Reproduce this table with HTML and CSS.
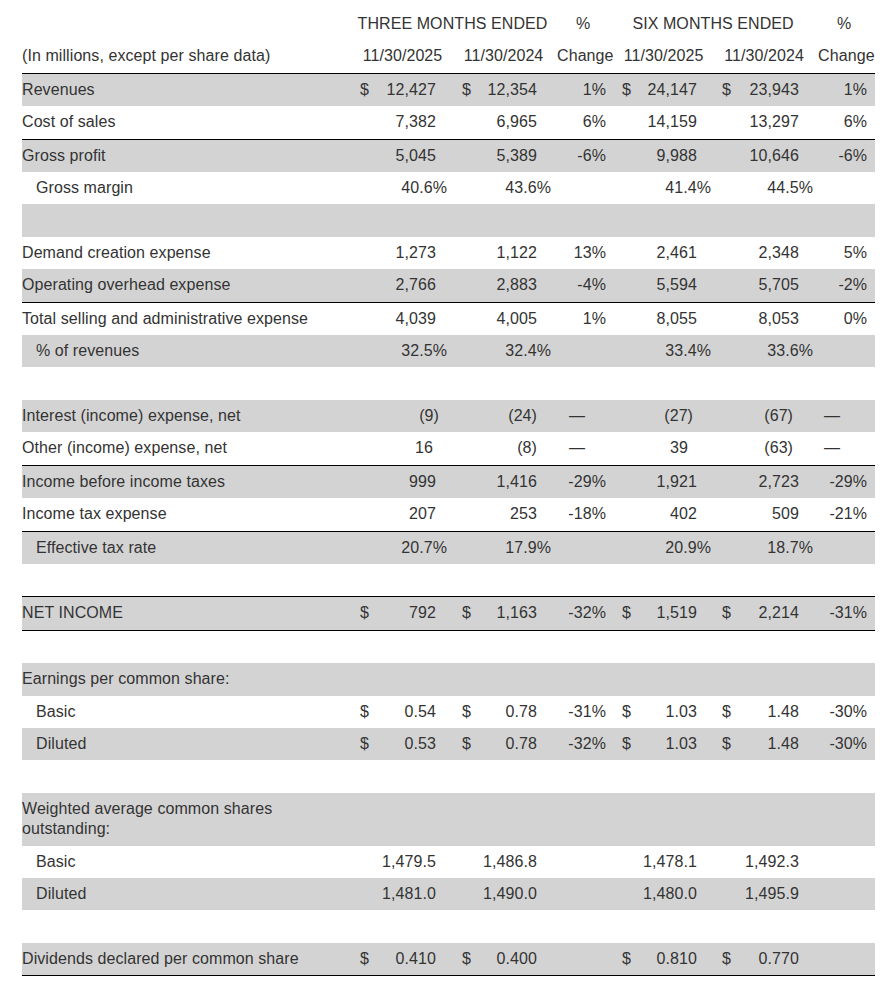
FILE: index.html
```html
<!DOCTYPE html>
<html lang="en">
<head>
<meta charset="utf-8">
<title>Income statement</title>
<link rel="stylesheet" href="styles.css">
</head>
<body>
<table class="fin">
  <colgroup>
    <col class="w-label">
    <col class="w-d"><col class="w-v1"><col class="w-s1">
    <col class="w-d"><col class="w-v2"><col class="w-s2">
    <col class="w-c1">
    <col class="w-d"><col class="w-v3"><col class="w-s3">
    <col class="w-d"><col class="w-v4"><col class="w-s4">
    <col class="w-c2">
  </colgroup>
  <thead>
    <tr>
      <th></th>
      <th colspan="6" class="hd">THREE MONTHS ENDED</th>
      <th class="hd hpct1">%</th>
      <th colspan="6" class="hd hsix">SIX MONTHS ENDED</th>
      <th class="hd hpct2">%</th>
    </tr>
    <tr class="rule">
      <th class="hlabel">(In millions, except per share data)</th>
      <th colspan="3" class="hd">11/30/2025</th>
      <th colspan="3" class="hd">11/30/2024</th>
      <th class="hd hch1">Change</th>
      <th colspan="3" class="hd">11/30/2025</th>
      <th colspan="3" class="hd">11/30/2024</th>
      <th class="hd hch2">Change</th>
    </tr>
  </thead>
  <tbody>
    <tr class="g">
      <td>Revenues</td>
      <td>$</td><td>12,427</td><td></td>
      <td>$</td><td>12,354</td><td></td>
      <td>1%</td>
      <td>$</td><td>24,147</td><td></td>
      <td>$</td><td>23,943</td><td></td>
      <td>1%</td>
    </tr>
    <tr class="rule">
      <td>Cost of sales</td>
      <td></td><td>7,382</td><td></td>
      <td></td><td>6,965</td><td></td>
      <td>6%</td>
      <td></td><td>14,159</td><td></td>
      <td></td><td>13,297</td><td></td>
      <td>6%</td>
    </tr>
    <tr class="g">
      <td>Gross profit</td>
      <td></td><td>5,045</td><td></td>
      <td></td><td>5,389</td><td></td>
      <td>-6%</td>
      <td></td><td>9,988</td><td></td>
      <td></td><td>10,646</td><td></td>
      <td>-6%</td>
    </tr>
    <tr>
      <td class="sub">Gross margin</td>
      <td></td><td class="first"><span class="pct">40.6%</span></td><td></td>
      <td></td><td><span class="pct">43.6%</span></td><td></td>
      <td></td>
      <td></td><td><span class="pct">41.4%</span></td><td></td>
      <td></td><td><span class="pct">44.5%</span></td><td></td>
      <td></td>
    </tr>
    <tr class="g"><td colspan="15">&nbsp;</td></tr>
    <tr>
      <td>Demand creation expense</td>
      <td></td><td>1,273</td><td></td>
      <td></td><td>1,122</td><td></td>
      <td>13%</td>
      <td></td><td>2,461</td><td></td>
      <td></td><td>2,348</td><td></td>
      <td>5%</td>
    </tr>
    <tr class="g rule">
      <td>Operating overhead expense</td>
      <td></td><td>2,766</td><td></td>
      <td></td><td>2,883</td><td></td>
      <td>-4%</td>
      <td></td><td>5,594</td><td></td>
      <td></td><td>5,705</td><td></td>
      <td>-2%</td>
    </tr>
    <tr>
      <td>Total selling and administrative expense</td>
      <td></td><td>4,039</td><td></td>
      <td></td><td>4,005</td><td></td>
      <td>1%</td>
      <td></td><td>8,055</td><td></td>
      <td></td><td>8,053</td><td></td>
      <td>0%</td>
    </tr>
    <tr class="g">
      <td class="sub">% of revenues</td>
      <td></td><td class="first"><span class="pct">32.5%</span></td><td></td>
      <td></td><td><span class="pct">32.4%</span></td><td></td>
      <td></td>
      <td></td><td><span class="pct">33.4%</span></td><td></td>
      <td></td><td><span class="pct">33.6%</span></td><td></td>
      <td></td>
    </tr>
    <tr><td colspan="15">&nbsp;</td></tr>
    <tr class="g">
      <td>Interest (income) expense, net</td>
      <td></td><td><span class="hang">(9)</span></td><td></td>
      <td></td><td>(24)</td><td></td>
      <td class="dash">—</td>
      <td></td><td class="in4">(27)</td><td></td>
      <td></td><td class="in6">(67)</td><td></td>
      <td class="dash">—</td>
    </tr>
    <tr class="rule">
      <td>Other (income) expense, net</td>
      <td></td><td class="in3">16</td><td></td>
      <td></td><td>(8)</td><td></td>
      <td class="dash">—</td>
      <td></td><td class="in9">39</td><td></td>
      <td></td><td class="in6">(63)</td><td></td>
      <td class="dash">—</td>
    </tr>
    <tr class="g">
      <td>Income before income taxes</td>
      <td></td><td>999</td><td></td>
      <td></td><td>1,416</td><td></td>
      <td>-29%</td>
      <td></td><td>1,921</td><td></td>
      <td></td><td>2,723</td><td></td>
      <td>-29%</td>
    </tr>
    <tr class="rule">
      <td>Income tax expense</td>
      <td></td><td>207</td><td></td>
      <td></td><td>253</td><td></td>
      <td>-18%</td>
      <td></td><td>402</td><td></td>
      <td></td><td>509</td><td></td>
      <td>-21%</td>
    </tr>
    <tr class="g">
      <td class="sub">Effective tax rate</td>
      <td></td><td class="first"><span class="pct">20.7%</span></td><td></td>
      <td></td><td><span class="pct">17.9%</span></td><td></td>
      <td></td>
      <td></td><td><span class="pct">20.9%</span></td><td></td>
      <td></td><td><span class="pct">18.7%</span></td><td></td>
      <td></td>
    </tr>
    <tr class="rule"><td colspan="15">&nbsp;</td></tr>
    <tr class="g rule">
      <td>NET INCOME</td>
      <td>$</td><td>792</td><td></td>
      <td>$</td><td>1,163</td><td></td>
      <td>-32%</td>
      <td>$</td><td>1,519</td><td></td>
      <td>$</td><td>2,214</td><td></td>
      <td>-31%</td>
    </tr>
    <tr><td colspan="15">&nbsp;</td></tr>
    <tr class="g">
      <td>Earnings per common share:</td>
      <td colspan="14"></td>
    </tr>
    <tr>
      <td class="sub">Basic</td>
      <td>$</td><td>0.54</td><td></td>
      <td>$</td><td>0.78</td><td></td>
      <td>-31%</td>
      <td>$</td><td>1.03</td><td></td>
      <td>$</td><td>1.48</td><td></td>
      <td>-30%</td>
    </tr>
    <tr class="g">
      <td class="sub">Diluted</td>
      <td>$</td><td>0.53</td><td></td>
      <td>$</td><td>0.78</td><td></td>
      <td>-32%</td>
      <td>$</td><td>1.03</td><td></td>
      <td>$</td><td>1.48</td><td></td>
      <td>-30%</td>
    </tr>
    <tr><td colspan="15">&nbsp;</td></tr>
    <tr class="g">
      <td>Weighted average common shares outstanding:</td>
      <td colspan="14"></td>
    </tr>
    <tr>
      <td class="sub">Basic</td>
      <td></td><td>1,479.5</td><td></td>
      <td></td><td>1,486.8</td><td></td>
      <td></td>
      <td></td><td>1,478.1</td><td></td>
      <td></td><td>1,492.3</td><td></td>
      <td></td>
    </tr>
    <tr class="g">
      <td class="sub">Diluted</td>
      <td></td><td>1,481.0</td><td></td>
      <td></td><td>1,490.0</td><td></td>
      <td></td>
      <td></td><td>1,480.0</td><td></td>
      <td></td><td>1,495.9</td><td></td>
      <td></td>
    </tr>
    <tr><td colspan="15">&nbsp;</td></tr>
    <tr class="g rule">
      <td>Dividends declared per common share</td>
      <td>$</td><td>0.410</td><td></td>
      <td>$</td><td>0.400</td><td></td>
      <td></td>
      <td>$</td><td>0.810</td><td></td>
      <td>$</td><td>0.770</td><td></td>
      <td></td>
    </tr>
  </tbody>
</table>
</body>
</html>
```

FILE: styles.css
```css
html, body {
  margin: 0;
  padding: 0;
  background: #ffffff;
}

body {
  padding: 8px 10px 0 22px;
  font-family: "Liberation Sans", Arial, sans-serif;
  font-size: 16px;
  letter-spacing: 0.08px;
  color: #333333;
}

.fin {
  width: 853px;
  border-collapse: collapse;
  table-layout: fixed;
}

.w-label { width: 333px; }
.w-d { width: 25px; }
.w-v1 { width: 56px; }
.w-s1 { width: 21px; }
.w-v2 { width: 55px; }
.w-s2 { width: 20px; }
.w-c1 { width: 60px; }
.w-v3 { width: 55px; }
.w-s3 { width: 20px; }
.w-v4 { width: 57px; }
.w-s4 { width: 19px; }
.w-c2 { width: 57px; }

.fin th,
.fin td {
  padding: 6px 0;
  line-height: 20.4px;
  font-weight: normal;
  white-space: nowrap;
  vertical-align: top;
}

.fin td:first-child {
  white-space: normal;
  text-align: left;
}

.fin th.hd {
  text-align: center;
  padding-right: 7px;
}

.fin th.hpct1 { padding-right: 8px; }
.fin th.hsix { padding-right: 9px; }
.fin th.hpct2 { padding-right: 5px; }
.fin th.hch2 { padding-right: 4px; }

.fin th.hlabel {
  text-align: left;
}

.fin tr.g td {
  background: #d3d3d3;
}

.fin tr.rule th,
.fin tr.rule td {
  border-bottom: 1px solid #000000;
}

.fin td.sub {
  padding-left: 14px;
}

/* dollar sign columns */
.fin td:nth-child(2),
.fin td:nth-child(5),
.fin td:nth-child(9),
.fin td:nth-child(12) {
  text-align: left;
  padding-left: 5px;
}

/* value columns */
.fin td:nth-child(3),
.fin td:nth-child(6),
.fin td:nth-child(10),
.fin td:nth-child(13) {
  text-align: right;
}

/* change columns */
.fin td:nth-child(8) {
  text-align: right;
  padding-right: 11px;
}

.fin td:nth-child(15) {
  text-align: right;
  padding-right: 8px;
}

.fin td.dash:nth-child(8) { padding-right: 32px; }
.fin td.dash:nth-child(15) { padding-right: 35px; }

.pct {
  margin-right: -14px;
}

.fin td.first .pct {
  margin-right: -11px;
}

.hang {
  margin-right: -3px;
}

.fin td.in3 { padding-right: 3px; }
.fin td.in4 { padding-right: 4px; }
.fin td.in6 { padding-right: 6px; }
.fin td.in9 { padding-right: 9px; }
```
